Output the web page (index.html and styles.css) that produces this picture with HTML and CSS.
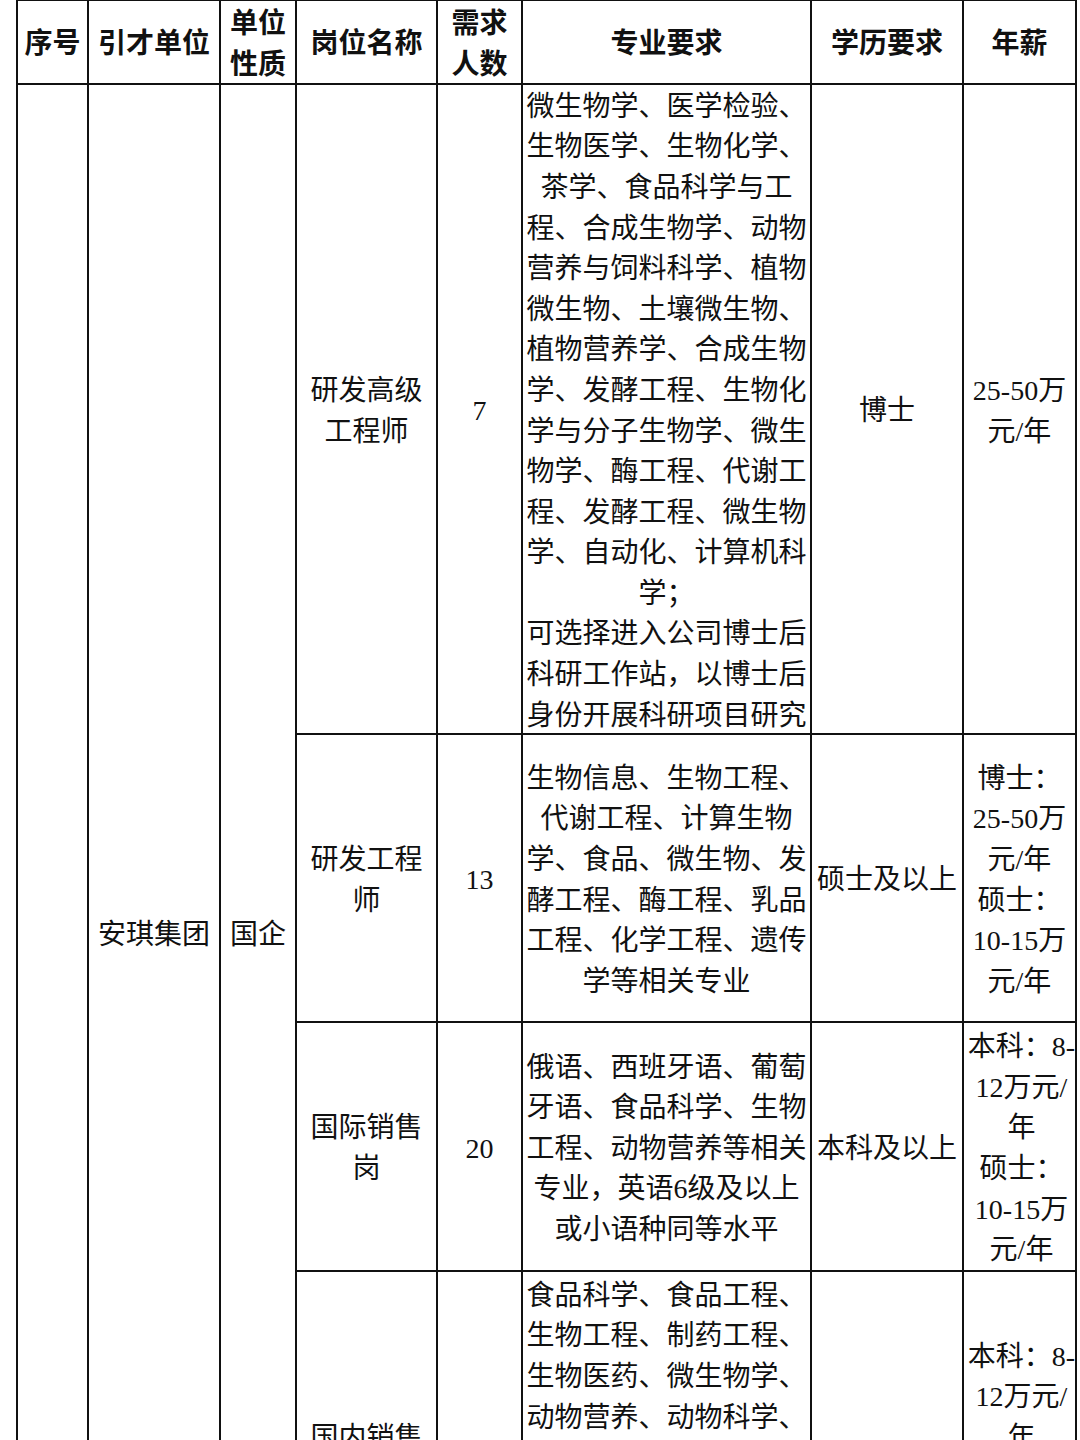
FILE: index.html
```html
<!DOCTYPE html>
<html lang="zh-CN">
<head>
<meta charset="utf-8">
<title>引才岗位表</title>
<link rel="stylesheet" href="styles.css">
</head>
<body>
<div class="sheet">
  <div class="cell head">序号</div>
  <div class="cell head">引才单位</div>
  <div class="cell head">单位<br>性质</div>
  <div class="cell head">岗位名称</div>
  <div class="cell head">需求<br>人数</div>
  <div class="cell head">专业要求</div>
  <div class="cell head">学历要求</div>
  <div class="cell head">年薪</div>

  <div class="cell span-all"></div>
  <div class="cell span-all">安琪集团</div>
  <div class="cell span-all">国企</div>

  <div class="cell">研发高级<br>工程师</div>
  <div class="cell">7</div>
  <div class="cell">微生物学、医学检验、<br>生物医学、生物化学、<br>茶学、食品科学与工<br>程、合成生物学、动物<br>营养与饲料科学、植物<br>微生物、土壤微生物、<br>植物营养学、合成生物<br>学、发酵工程、生物化<br>学与分子生物学、微生<br>物学、酶工程、代谢工<br>程、发酵工程、微生物<br>学、自动化、计算机科<br>学；<br>可选择进入公司博士后<br>科研工作站，以博士后<br>身份开展科研项目研究</div>
  <div class="cell">博士</div>
  <div class="cell">25-50万<br>元/年</div>

  <div class="cell">研发工程<br>师</div>
  <div class="cell">13</div>
  <div class="cell">生物信息、生物工程、<br>代谢工程、计算生物<br>学、食品、微生物、发<br>酵工程、酶工程、乳品<br>工程、化学工程、遗传<br>学等相关专业</div>
  <div class="cell">硕士及以上</div>
  <div class="cell">博士：<br>25-50万<br>元/年<br>硕士：<br>10-15万<br>元/年</div>

  <div class="cell">国际销售<br>岗</div>
  <div class="cell">20</div>
  <div class="cell">俄语、西班牙语、葡萄<br>牙语、食品科学、生物<br>工程、动物营养等相关<br>专业，英语6级及以上<br>或小语种同等水平</div>
  <div class="cell">本科及以上</div>
  <div class="cell pay">本科：8-<br>12万元/<br>年<br>硕士：<br>10-15万<br>元/年</div>

  <div class="cell">国内销售<br>岗</div>
  <div class="cell">30</div>
  <div class="cell">食品科学、食品工程、<br>生物工程、制药工程、<br>生物医药、微生物学、<br>动物营养、动物科学、<br>动物医学、兽医学、药<br>学、临床医学、市场营<br>销、工商管理、电子商<br>务、国际贸易等相关专<br>业</div>
  <div class="cell">本科及以上</div>
  <div class="cell pay">本科：8-<br>12万元/<br>年<br>硕士：<br>10-15万<br>元/年</div>

  <div class="cell">市场推广<br>岗</div>
  <div class="cell">10</div>
  <div class="cell">市场营销、食品科学、<br>生物工程等相关专业</div>
  <div class="cell">本科及以上</div>
  <div class="cell">8-12万<br>元/年</div>
</div>
</body>
</html>
```

FILE: styles.css
```css
html,
body {
  margin: 0;
  padding: 0;
  background: #ffffff;
  overflow: hidden;
}

.sheet {
  display: grid;
  grid-template-columns: 71px 132px 76px 141px 85px 289px 152px 113px;
  grid-template-rows: 84px 650px 288px 249px 370px 140px;
  width: max-content;
  margin: -1px 0 0 16px;
  border-left: 2px solid #111111;
  border-top: 2px solid #111111;
  font-family: "Liberation Serif", "Noto Sans CJK SC", serif;
  font-size: 28px;
  line-height: 40.6px;
  color: #111111;
}

.cell {
  box-sizing: border-box;
  border-right: 2px solid #111111;
  border-bottom: 2px solid #111111;
  padding-top: 5px;
  display: flex;
  align-items: center;
  justify-content: center;
  text-align: center;
  white-space: nowrap;
  min-width: 0;
}

.pay {
  padding-left: 4px;
}

.head {
  font-weight: 700;
}

.span-all {
  grid-row: span 5;
}
```
